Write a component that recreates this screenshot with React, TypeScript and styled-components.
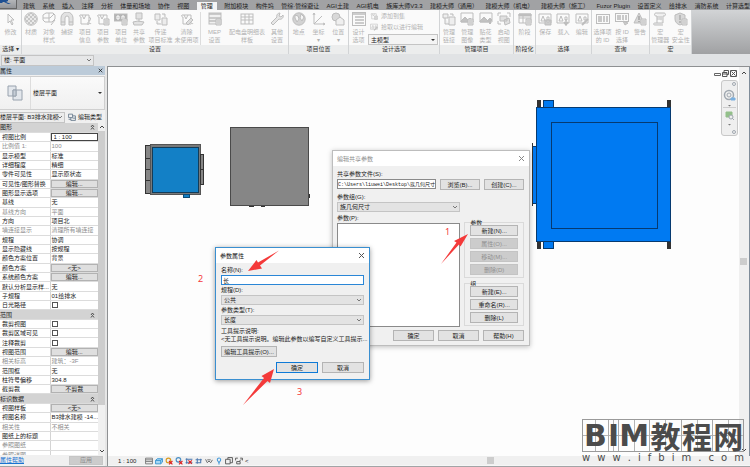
import React from "react";
import styled, { createGlobalStyle, css } from "styled-components";

const GlobalStyle = createGlobalStyle`
  *, *::before, *::after { box-sizing: border-box; }
  html, body, #root { height: 100%; }
  body {
    margin: 0;
    overflow: hidden;
    font: 6px/8px "Liberation Sans", "Noto Sans CJK SC", sans-serif;
    color: #222;
    background: #e1e3e5;
  }
  button, input, select { font: inherit; color: inherit; margin: 0; padding: 0; border-radius: 0; }
  button, select { cursor: pointer; }
  p { margin: 0; }
`;

/* ---------- page frame ---------- */

const Page = styled.div`
  display: flex;
  flex-direction: column;
  height: 100vh;
  border-bottom: 1px solid #a2a4a6;
`;

const TabBar = styled.nav`
  display: flex;
  height: 10px;
  background: #a1a2a4;
  overflow: hidden;
`;

const AppButton = styled.button`
  width: 17px;
  height: 9px;
  flex: none;
  border: 0;
  border-right: 1px solid #666;
  border-bottom: 1px solid #666;
  background: linear-gradient(#b4b6b9, #94969a);
  svg { display: block; }
`;

const TabList = styled.div`
  flex: 1;
  display: flex;
  justify-content: space-between;
  margin: 2px 0 0 6px;
`;

const Tab = styled.button<{ $active?: boolean }>`
  flex: none;
  border: 0;
  padding: 0 ${(p) => (p.$active ? 4 : 0)}px;
  background: ${(p) => (p.$active ? "#f4f5f5" : "transparent")};
  color: #1c1c1c;
  line-height: 8px;
  white-space: nowrap;
`;

const Ribbon = styled.div`
  display: flex;
  height: 44px;
  background: linear-gradient(#d2d4d6, #a0a1a3);
`;

const Panel = styled.section<{ $w: number }>`
  flex: none;
  width: ${(p) => p.$w}px;
  display: flex;
  flex-direction: column;
  background: #fafafa;
  border-right: 1px solid #d2d4d6;
`;

const PanelBody = styled.div`
  flex: 1;
  display: flex;
  padding-top: 2px;
`;

const PanelTitle = styled.h2`
  margin: 0;
  height: 9px;
  font-size: 6px;
  line-height: 9px;
  font-weight: 400;
  text-align: center;
  white-space: nowrap;
  background: #eceded;
  color: #333;
`;

const Tool = styled.button<{ $w?: number }>`
  ${(p) => (p.$w ? css`flex: none; width: ${p.$w}px;` : css`flex: 1; min-width: 0;`)}
  display: flex;
  flex-direction: column;
  align-items: center;
  gap: 2px;
  border: 0;
  background: none;
  color: #b2b2b2;
  line-height: 8px;
  white-space: pre;
  svg { flex: none; }
`;

const ToolDivider = styled.span`
  width: 1px;
  background: #dcdcdc;
`;

const OptionTools = styled.div`
  flex: 1;
  display: flex;
  flex-direction: column;
  gap: 3px;
  padding-right: 1px;
`;

const InlineTool = styled.button`
  display: flex;
  align-items: center;
  gap: 3px;
  height: 8px;
  border: 0;
  padding-left: 2px;
  background: none;
  color: #b2b2b2;
  white-space: nowrap;
`;

const SelectWrap = styled.span`
  position: relative;
  display: block;
  svg { position: absolute; right: 2px; top: 50%; margin-top: -3px; pointer-events: none; }
`;

const SelectBox = styled.select<{ $h?: number; $tone?: string }>`
  appearance: none;
  display: block;
  width: 100%;
  height: ${(p) => p.$h ?? 10}px;
  padding: 0 8px 0 2px;
  border: 1px solid #c4c4c4;
  background: ${(p) => p.$tone ?? "#e3e3e3"};
  line-height: 8px;
  outline: none;
`;

const OptionsBar = styled.div`
  height: 12px;
  display: flex;
  align-items: center;
  background: #e1e3e5;
`;

const OptionSelect = styled.div`
  width: 94px;
  padding-left: 1px;
`;

const Workspace = styled.main`
  flex: 1;
  min-height: 0;
  display: flex;
`;

/* ---------- properties palette ---------- */

const Palette = styled.aside`
  flex: none;
  width: 105px;
  display: flex;
  flex-direction: column;
  background: #f0f0f0;
  overflow: hidden;
`;

const PaletteTitle = styled.header`
  display: flex;
  justify-content: space-between;
  align-items: center;
  height: 9px;
  padding-right: 2px;
  background: #bccbd9;
`;

const PlainButton = styled.button`
  border: 0;
  background: none;
  display: flex;
  align-items: center;
  gap: 2px;
  white-space: nowrap;
`;

const TypeSelector = styled.button`
  display: flex;
  align-items: center;
  height: 34px;
  margin: 1px 0;
  border: 1px solid #cfcfcf;
  border-left: 0;
  background: linear-gradient(#fafafa, #f0f0f0);
  text-align: left;
  padding-right: 1px;
`;

const TypeThumb = styled.span`
  width: 31px;
  height: 100%;
  display: grid;
  place-items: center;
  border-right: 1px solid #ddd;
  margin-right: 2px;
`;

const Grow = styled.span`
  flex: 1;
`;

const InstanceRow = styled.div`
  display: flex;
  align-items: center;
  height: 12px;
  padding-right: 3px;
  gap: 3px;
`;

const InstanceSelect = styled.div`
  width: 65px;
  select { padding-left: 0; padding-right: 0; border-left: 0; }
`;

const PaletteBody = styled.div`
  flex: 1;
  min-height: 0;
  display: flex;
  overflow: hidden;
`;

const TableClip = styled.div`
  width: 98px;
  height: 100%;
  overflow: hidden;
`;

const PropTable = styled.table`
  width: 100%;
  height: calc(100% + 5px);
  border-collapse: collapse;
  table-layout: fixed;
  background: #fff;
  td, th {
    padding: 0;
    height: 9px;
    text-align: left;
    font-weight: 400;
    line-height: 8px;
    white-space: nowrap;
    overflow: hidden;
    border-bottom: 1px solid #dcdcdc;
  }
`;

const NameCell = styled.th<{ $dim?: boolean }>`
  && { padding-left: 2px; border-right: 1px solid #d4d4d4; }
  color: ${(p) => (p.$dim ? "#8c8c8c" : "#222")};
`;

const ValueCell = styled.td<{ $dim?: boolean; $boxed?: boolean }>`
  && { padding-left: ${(p) => (p.$boxed ? 0 : 1)}px; }
  color: ${(p) => (p.$dim ? "#8c8c8c" : "#222")};
`;

const GroupCell = styled.th`
  && { background: #d3d3d3; }
`;

const GroupLabel = styled.span`
  display: flex;
  justify-content: space-between;
  align-items: center;
  padding-right: 3px;
`;

const CellButton = styled.button`
  display: block;
  width: 100%;
  height: 8px;
  border: 1px solid #b2b2b2;
  background: #dfdfdf;
  line-height: 6px;
`;

const ScaleInput = styled.input`
  display: block;
  width: 100%;
  height: 8px;
  border: 1px solid #444;
  padding-left: 2px;
  line-height: 6px;
`;

const Check = styled.input`
  appearance: none;
  display: block;
  width: 6px;
  height: 6px;
  border: 1px solid #555;
  background: #fff;
`;

const PaletteScroll = styled.div`
  flex: 1;
  display: flex;
  flex-direction: column;
  align-items: center;
  justify-content: space-between;
  background: #f0f0f0;
`;

const ScrollThumb = styled.span`
  width: 7px;
  flex: 1;
  margin-bottom: 42px;
  background: #cdcdcd;
`;

const PaletteFooter = styled.footer`
  display: flex;
  justify-content: space-between;
  height: 11px;
  padding: 1px 2px 1px 0;
  a { color: #1a73d0; }
`;

const ApplyButton = styled.button`
  width: 34px;
  border: 1px solid #c6c6c6;
  background: #cccccc;
  color: #8a8a8a;
  line-height: 7px;
`;

const Splitter = styled.div`
  width: 3px;
  background: #e6e6e6;
  border-right: 1px solid #8e9092;
`;

/* ---------- drawing area ---------- */

const ViewArea = styled.div`
  flex: 1;
  min-width: 0;
  display: flex;
  flex-direction: column;
  border-top: 1px solid #8e9092;
`;

const ViewRow = styled.div`
  flex: 1;
  min-height: 0;
  display: flex;
`;

const Canvas = styled.div`
  position: relative;
  flex: 1;
  background: #fdfdfd;
`;

const Sheet = styled.svg`
  position: absolute;
  left: 0;
  top: 0;
  width: 100%;
  height: 100%;
  pointer-events: none;
`;

const VScroll = styled.div`
  width: 8px;
  display: flex;
  flex-direction: column;
  align-items: center;
  justify-content: space-between;
  padding: 2px 0;
  background: #f0f0f0;
`;

const Thumb = styled.span`
  width: 7px;
  height: 7px;
  background: #cdcdcd;
`;

const EdgeBar = styled.div`
  width: 3px;
  background: #f0f0f0;
  border-right: 1px solid #7f8c99;
`;

const ViewBar = styled.div`
  height: 10px;
  display: flex;
  align-items: center;
  gap: 2px;
  padding-left: 10px;
  background: #f0f0f0;
  border-bottom: 1px solid #f6f6f6;
`;

const ScaleText = styled.span`
  width: 25px;
  white-space: nowrap;
`;

const HScroll = styled.div`
  flex: 1;
  display: flex;
  justify-content: center;
  padding-right: 20px;
`;

const WindowButtons = styled.div`
  position: absolute;
  right: 2px;
  top: 3px;
  display: flex;
  gap: 1px;
`;

const NavBar = styled.div`
  position: absolute;
  right: 1px;
  top: 13px;
  width: 17px;
  height: 56px;
  border: 1px solid #c8c8c8;
  border-radius: 3px;
  background: #efefef;
`;

/* ---------- dialogs ---------- */

const Dialog = styled.div<{ $x: number; $y: number; $w: number; $active?: boolean }>`
  position: absolute;
  left: ${(p) => p.$x}px;
  top: ${(p) => p.$y}px;
  width: ${(p) => p.$w}px;
  background: #f0f0f0;
  border: 1px solid ${(p) => (p.$active ? "#3a8fd0" : "#bdbdbd")};
  box-shadow: 0 1px 5px rgba(0, 0, 0, ${(p) => (p.$active ? 0.4 : 0.25)});
`;

const DialogTitle = styled.header<{ $muted?: boolean }>`
  display: flex;
  justify-content: space-between;
  align-items: center;
  height: 15px;
  padding: 0 4px;
  background: #fff;
  color: ${(p) => (p.$muted ? "#8e8e8e" : "#111")};
`;

const SharedBody = styled.div`
  display: flex;
  flex-direction: column;
  padding: 4px 5px 4px 4px;
`;

const Label = styled.label`
  display: block;
  height: 9px;
  line-height: 8px;
  white-space: nowrap;
`;

const Row = styled.div<{ $end?: boolean; $mt?: number }>`
  display: flex;
  gap: 4px;
  margin-top: ${(p) => p.$mt ?? 0}px;
  justify-content: ${(p) => (p.$end ? "flex-end" : "flex-start")};
`;

const TextBox = styled.input<{ $focus?: boolean }>`
  flex: 1;
  min-width: 0;
  width: 100%;
  height: 10px;
  border: 1px solid ${(p) => (p.$focus ? "#2a86d6" : "#8a8a8a")};
  padding: 0 1px;
  background: #fff;
  outline: none;
`;

const PathBox = styled(TextBox)`
  padding: 0;
  font-family: "Liberation Mono", "Noto Sans CJK SC", monospace;
  font-size: 5px;
`;

const DialogButton = styled.button<{ $w?: number; $primary?: boolean }>`
  width: ${(p) => (p.$w ? `${p.$w}px` : "100%")};
  flex: none;
  height: 11px;
  border: 1px solid ${(p) => (p.$primary ? "#0f7ad6" : "#b4b4b4")};
  background: #e2e2e2;
  line-height: 8px;
  white-space: nowrap;
  &:disabled { background: #cccccc; border-color: #c4c4c4; color: #909090; }
`;

const SharedColumns = styled.div`
  display: flex;
  gap: 4px;
  justify-content: space-between;
`;

const SharedLeft = styled.div`
  width: 124px;
`;

const ListBox = styled.div`
  height: 104px;
  border: 1px solid #8a8a8a;
  background: #fff;
`;

const SharedRight = styled.div`
  width: 60px;
  padding-top: 30px;
`;

const Group = styled.fieldset`
  margin: 0 0 3px;
  padding: 0 5px 2px;
  min-width: 0;
  border: 1px solid #dadada;
  legend { padding: 0; line-height: 6px; height: 5px; }
  &:last-child { margin-bottom: 0; }
`;

const ButtonStack = styled.div`
  display: flex;
  flex-direction: column;
  gap: 2px;
`;

const ParamBody = styled.div`
  padding: 3px 5px 6px;
`;

const FieldBlock = styled.div`
  margin-bottom: 1px;
`;

const Hint = styled.p`
  height: 8px;
  white-space: nowrap;
`;

/* ---------- watermark ---------- */

const Watermark = styled.div`
  position: absolute;
  right: -5px;
  bottom: -8px;
  width: 162px;
  color: #4b4b4b;
`;

const Cells = styled.div`
  display: flex;
  height: 33px;
  border: 1px solid #9a9a9a;
`;

const Cell = styled.span<{ $w: number; $latin?: boolean }>`
  flex: ${(p) => p.$w} 0 0;
  min-width: 0;
  display: flex;
  justify-content: center;
  border-right: 1px solid #aaa;
  background:
    linear-gradient(#b4b4b4, #b4b4b4) center / 1px 100% no-repeat,
    linear-gradient(#b4b4b4, #b4b4b4) center / 100% 1px no-repeat;
  font: ${(p) => (p.$latin ? '700 30px/32px "DejaVu Sans", sans-serif' : '700 30px/30px "Noto Sans CJK SC", sans-serif')};
  &:last-child { border-right: 0; }
`;

const SiteLine = styled.p`
  font: 10px/12px "DejaVu Sans", sans-serif;
  text-align: justify;
  text-align-last: justify;
  white-space: nowrap;
`;

/* ---------- icons ---------- */

const Svg = ({ s = 14, children, stroke = "#bdbdbd" }: { s?: number; children: React.ReactNode; stroke?: string }) => (
  <svg width={s} height={s} viewBox="0 0 14 14" fill="none" stroke={stroke} strokeWidth="1" aria-hidden="true">
    {children}
  </svg>
);

const sheet = <path d="M2 3h9v8c0 1 2 1 2 0M2 3c-1 1 0 2 1 2v7h8M4 3l2 4 2-4" />;
const page = <path d="M8 7h5v6H8zM9 9h3M9 11h3" fill="#e6e6e6" />;
const warn = <path d="M1 2h12v9H1zM3 9l2-5 2 5zM9 5h2v3H9z" />;

const icons: Record<string, React.ReactNode> = {
  cursor: <path d="M4 2l6 6H7l2 4-1 1-2-4-2 2z" fill="#f6f6f6" />,
  material: (
    <>
      <circle cx="7" cy="7" r="6.3" fill="#e9e9e9" />
      <path d="M2 4l8 8M4 2l8 8M7 1l6 6M1 7l6 6M12 4l-8 8M10 2l-8 8M7 1L1 7M13 7l-6 6" strokeWidth=".8" />
    </>
  ),
  object: <path d="M1 3l3-2h7l2 2v4l-3 3H3L1 8zM1 6h7l4-4M7 1v9M9 13l4-5" />,
  snap: <path d="M1 13V6a6 6 0 0 1 12 0v7H9V6a2 2 0 0 0-4 0v7zM1 10h4M9 10h4" fill="#e2e2e2" />,
  info: <>{sheet}<path d="M11 5a2 2 0 1 1-1 4M10 10v3" /></>,
  params: <>{sheet}{page}</>,
  units: <><rect x="0" y="2" width="13" height="7" fill="#b4b4b4" /><path d="M3 4v3h2V4zM8 4v3h2V4z" stroke="#fff" />{page}</>,
  shared: <><path d="M4 1h6v6H4zM1 10l5-1 6 1-2 3H2zM7 7v3" fill="#e2e2e2" /></>,
  transfer: <><path d="M1 2h5v6H1zM8 6h5v7H8zM8 2h3v3M3 9v3h4" fill="#ececec" /></>,
  purge: <>{sheet}<path d="M11 6l-5 5 2 2 5-5z" fill="#ddd" /></>,
  mep: <><rect x="1" y="1" width="12" height="11" fill="#f0f0f0" /><path d="M1 2h12M1 6h12M1 9h7" strokeWidth="1.5" />{page}</>,
  schedule: <><rect x="1" y="2" width="12" height="10" /><path d="M1 5h12M1 8h12M5 2v10M9 2v10" /></>,
  wrench: <path d="M1 11l6-6c-1-2 1-4 3-4l-1 3 2 1 2-2c1 3-2 5-4 4l-6 6z" fill="#e6e6e6" />,
  globe: <><circle cx="7" cy="7" r="6.2" fill="#d2d2d2" /><path d="M3 3l3 1 1 3-2 3-2-4zM9 2l3 3-2 4-2-3z" fill="#f5f5f5" /></>,
  axes: <path d="M2 1v11h11M2 12l8-8M1 3l1-2 1 2M11 11l2 1-2 1" />,
  position: <><circle cx="5" cy="5" r="4" fill="#d8d8d8" /><path d="M5 8l4-3 4 3v5H5z" fill="#efefef" /></>,
  list: <><rect x="0.5" y="0.5" width="13" height="13" /><path d="M1 2h12M3 5h9M3 8h9M3 11h9" strokeWidth="1.5" /></>,
  link: <><path d="M1 2h5v4H1zM7 5h6v8H7zM3 6v6h4M8 2h3v2" fill="#eee" /></>,
  image: <><path d="M1 1h12v9H1z" /><path d="M1 9l4-4 3 3 2-2 3 3v1H1z" fill="#c2c2c2" />{page}</>,
  decal: <><path d="M1 1h12v9H1z" /><path d="M1 9l4-4 5 5H1z" fill="#c2c2c2" /><path d="M11 6v6M9 8h4" strokeWidth="2" /></>,
  start: <><path d="M1 4V1h3M10 1h3v4M1 9v3h3" /><path d="M3 4h7v5H3zM7 8l5-2 1 5-5 2z" fill="#e0e0e0" /></>,
  phase: <><path d="M1 2h12v9H1zM1 6h12M5 2v9" /><path d="M1 2h12v2H1z" fill="#c0c0c0" />{page}</>,
  save: <>{warn}<path d="M7 8h6v5H7zM9 8v2h2V8" fill="#ccc" /></>,
  load: <>{warn}<path d="M10 7v5M8 10l2 3 2-3" strokeWidth="1.5" /></>,
  edit: <>{warn}<path d="M7 13l6-6" strokeWidth="2" /></>,
  barcode: <><rect x="0.5" y="2.5" width="13" height="9" /><path d="M3 4v6M5 4v6M8 4v6M11 4v6" strokeWidth="1.6" /></>,
  barid: <><rect x="0.5" y="1.5" width="13" height="8" /><path d="M3 3v5M5 3v5M8 3v5M11 3v5" strokeWidth="1.6" /><path d="M8 9l5 2-3 2z" fill="#ccc" /></>,
  alert: <><path d="M6 1L1 11h10z" fill="#d8d8d8" /><path d="M6 4v4M6 9v1" stroke="#888" />{page}</>,
  macro: <path d="M3 1h8c2 0 2 3 0 3h-1v7H2c-2 0-2 2 0 2h8M4 5h5M4 7h5M3 1C1 1 1 4 3 4h1v7" fill="#efefef" />,
  shield: <><path d="M6 1l5 2v4c0 3-2 5-5 6-3-1-5-3-5-6V3z" fill="#d8d8d8" /><path d="M6 3v5M6 9v2" stroke="#999" />{page}</>,
};

const Chevron = ({ dark }: { dark?: boolean }) => (
  <svg width="6" height="6" viewBox="0 0 6 6" fill="none" stroke={dark ? "#333" : "#777"} aria-hidden="true">
    <path d="M1 2l2 2 2-2" />
  </svg>
);
const Caret = ({ color = "#333" }: { color?: string }) => (
  <svg width="6" height="6" viewBox="0 0 6 6" fill={color} aria-hidden="true"><path d="M1 2h4L3 4z" /></svg>
);
const Cross = ({ color = "#555", s = 7 }: { color?: string; s?: number }) => (
  <svg width={s} height={s} viewBox="0 0 7 7" fill="none" stroke={color} aria-hidden="true"><path d="M1 1l5 5M6 1L1 6" /></svg>
);
const ScrollArrow = ({ up }: { up?: boolean }) => (
  <svg width="7" height="8" viewBox="0 0 7 8" fill="none" stroke="#444" aria-hidden="true">
    <path d={up ? "M2 5l2-2 2 2" : "M2 3l2 2 2-2"} />
  </svg>
);

/* ---------- data ---------- */

const tabs = ["建筑", "系统", "插入", "注释", "分析", "体量和场地", "协作", "视图", "管理", "附加模块", "构件坞", "管综·管综避让", "AGI土建", "AGI机电", "族库大师V3.3", "建模大师（通用）", "建模大师（机电）", "建模大师（施工）", "Fuzor Plugin", "设置定义", "给排水", "消防系统", "计算选型"];

type ToolDef = [icon: string, label: string, width?: number];

const settings: ToolDef[] = [
  ["material", "材质", 18], ["object", "对象\n样式", 18], ["snap", "捕捉", 18], ["info", "项目\n信息", 18],
  ["params", "项目\n参数", 18], ["units", "项目\n单位", 18], ["shared", "共享\n参数", 18],
  ["transfer", "传递\n项目标准", 25], ["purge", "清除\n未使用项", 27],
];
const mepTools: ToolDef[] = [["mep", "MEP\n设置", 27], ["schedule", "配电盘明细表\n样板", 38], ["wrench", "其他\n设置"]];

type Prop = { n: string; v?: string; k?: "group" | "btn" | "check" | "scale"; dim?: boolean };
const props: Prop[] = [
  { n: "图形", k: "group" },
  { n: "视图比例", v: "1 : 100", k: "scale" },
  { n: "比例值 1:", v: "100", dim: true },
  { n: "显示模型", v: "标准" },
  { n: "详细程度", v: "精细" },
  { n: "零件可见性", v: "显示原状态" },
  { n: "可见性/图形替换", v: "编辑...", k: "btn" },
  { n: "图形显示选项", v: "编辑...", k: "btn" },
  { n: "基线", v: "无" },
  { n: "基线方向", v: "平面", dim: true },
  { n: "方向", v: "项目北" },
  { n: "墙连接显示", v: "清理所有墙连接", dim: true },
  { n: "规程", v: "协调" },
  { n: "显示隐藏线", v: "按规程" },
  { n: "颜色方案位置", v: "背景" },
  { n: "颜色方案", v: "<无>", k: "btn" },
  { n: "系统颜色方案", v: "编辑...", k: "btn" },
  { n: "默认分析显示样...", v: "无" },
  { n: "子规程", v: "01给排水" },
  { n: "日光路径", k: "check" },
  { n: "范围", k: "group" },
  { n: "裁剪视图", k: "check" },
  { n: "裁剪区域可见", k: "check" },
  { n: "注释裁剪", k: "check" },
  { n: "视图范围", v: "编辑...", k: "btn" },
  { n: "相关标高", v: "建筑：-3F", dim: true },
  { n: "范围框", v: "无" },
  { n: "柱符号偏移", v: "304.8" },
  { n: "截剪裁", v: "不剪裁", k: "btn" },
  { n: "标识数据", k: "group" },
  { n: "视图样板", v: "<无>", k: "btn" },
  { n: "视图名称", v: "B3排水建模 -14..." },
  { n: "相关性", v: "不相关", dim: true },
  { n: "图纸上的标题", v: "" },
  { n: "参照图纸", v: "", dim: true },
  { n: "参照详图", v: "", dim: true },
];

/* ---------- parts ---------- */

const Tools = ({ items }: { items: ToolDef[] }) => (
  <>
    {items.map(([icon, label, w]) => (
      <Tool key={label} $w={w}>
        <Svg>{icons[icon]}</Svg>
        <span>{label}</span>
      </Tool>
    ))}
  </>
);

const RibbonPanel = ({ title, w, items, children }: { title: React.ReactNode; w: number; items?: ToolDef[]; children?: React.ReactNode }) => (
  <Panel $w={w}>
    <PanelBody>{items && <Tools items={items} />}{children}</PanelBody>
    <PanelTitle>{title}</PanelTitle>
  </Panel>
);

const Drop = ({ id, label, value, h, tone, caret }: { id?: string; label?: string; value: string; h?: number; tone?: string; caret?: boolean }) => (
  <SelectWrap>
    <SelectBox id={id} aria-label={label} $h={h} $tone={tone}><option>{value}</option></SelectBox>
    {caret ? <Caret /> : <Chevron />}
  </SelectWrap>
);

const Collapse = () => (
  <svg width="5" height="6" viewBox="0 0 5 6" fill="none" stroke="#333" strokeWidth=".8" aria-hidden="true">
    <path d="M1 3l1.5-2L4 3M1 5.5l1.5-2 1.5 2" />
  </svg>
);

const PropRow = ({ p }: { p: Prop }) => {
  if (p.k === "group")
    return <tr><GroupCell colSpan={2}><GroupLabel>{p.n}<Collapse /></GroupLabel></GroupCell></tr>;
  return (
    <tr>
      <NameCell scope="row" $dim={p.dim}>{p.n}</NameCell>
      <ValueCell $dim={p.dim} $boxed={p.k === "btn" || p.k === "scale"}>
        {p.k === "btn" ? <CellButton>{p.v}</CellButton>
          : p.k === "check" ? <Check type="checkbox" aria-label={p.n} />
          : p.k === "scale" ? <ScaleInput aria-label={p.n} defaultValue={p.v} />
          : p.v}
      </ValueCell>
    </tr>
  );
};

const PropertiesPalette = () => (
  <Palette>
    <PaletteTitle>属性<PlainButton aria-label="关闭"><Cross color="#111" s={5} /></PlainButton></PaletteTitle>
    <TypeSelector>
      <TypeThumb>
        <svg width="16" height="16" viewBox="0 0 16 16" fill="#e3e7ec" stroke="#98a2ae" aria-hidden="true">
          <path d="M1 1h8v10H1zM6 5h9v10H6z" /><path d="M6 5h3v6H6z" fill="#c5cdd6" />
        </svg>
      </TypeThumb>
      <Grow>楼层平面</Grow>
      <Caret />
    </TypeSelector>
    <InstanceRow>
      <InstanceSelect><Drop label="视图" value="楼层平面: B3排水建模" h={11} tone="#ececec" /></InstanceSelect>
      <PlainButton>
        <Svg s={8} stroke="#5f7488"><path d="M1 2h7v6H1zM8 5h5v8H5V8M1 11h4M8 9h5" strokeWidth="1.4" /></Svg>
        编辑类型
      </PlainButton>
    </InstanceRow>
    <PaletteBody>
      <TableClip>
        <PropTable>
          <colgroup><col width="50" /><col /></colgroup>
          <tbody>{props.map((p) => <PropRow key={p.n} p={p} />)}</tbody>
        </PropTable>
      </TableClip>
      <PaletteScroll><ScrollArrow up /><ScrollThumb /><ScrollArrow /></PaletteScroll>
    </PaletteBody>
    <PaletteFooter><a href="#help">属性帮助</a><ApplyButton disabled>应用</ApplyButton></PaletteFooter>
  </Palette>
);

const Model = () => (
  <Sheet aria-hidden="true">
    <g transform="translate(-108 -67)" stroke="#333" fill="#868686">
      <rect x="145.500" y="145.500" width="5" height="48" />
      <path d="M145 158.500h6M145 169.500h6M145 180.500h6" />
      <rect x="150.500" y="144.500" width="50" height="50" fill="#77797a" stroke="#555" />
      <rect x="152.500" y="147.500" width="46" height="45" fill="#1380c6" stroke="#143c58" />
      <rect x="200.500" y="154.500" width="3" height="30" /><path d="M200 169.500h4" />
      <rect x="183.500" y="194.500" width="6" height="3" fill="#1380c6" stroke="#0d4a75" />
      <rect x="230.500" y="127.500" width="78" height="78" stroke="#4a4a4a" />
      <path d="M249 206.500h5M261 206.500h4M309.500 194v4" />
      <g fill="#007af2" stroke="#063a70">
        <rect x="543.500" y="100.500" width="10" height="7" /><rect x="543.500" y="241.500" width="10" height="7" />
        <rect x="532.500" y="146.500" width="4" height="57" />
        <rect x="536.500" y="107.500" width="134" height="134" />
        <rect x="551.500" y="122.500" width="106" height="106" />
      </g>
      <path d="M532.500 143v63" />
      <g fill="#333" stroke="none">
        <path d="M537 100h4v7h-4zM667 100h4v7h-4zM537 242h4v7h-4zM667 242h4v7h-4z" />
      </g>
    </g>
  </Sheet>
);

const Notes = () => (
  <Sheet aria-hidden="true">
    <g transform="translate(-108 -67)" fill="#f43a3a">
      <path d="M468 234l-7.500 12.500-1.500-2L441 264l15.500-21.500-2.500-1.500z" />
      <path d="M248 271l8.500-11 1.500 2.500L279 250.500 260 265.500l2 3z" />
      <path d="M274 369l-4 14-2.500-2L243 405l21-27-2.500-2z" />
      <g fontFamily="Noto Sans, sans-serif" fontSize="9">
        <text x="445" y="235">1</text><text x="198" y="282">2</text><text x="297" y="395">3</text>
      </g>
    </g>
  </Sheet>
);

const SharedDialog = () => (
  <Dialog $x={224} $y={83} $w={198} role="dialog" aria-label="编辑共享参数">
    <DialogTitle $muted>编辑共享参数<PlainButton aria-label="关闭"><Cross color="#888" /></PlainButton></DialogTitle>
    <SharedBody>
      <Label htmlFor="file">共享参数文件(S):</Label>
      <Row>
        <PathBox id="file" defaultValue="C:\Users\liuwei\Desktop\族几何尺寸" />
        <DialogButton $w={40}>浏览(B)...</DialogButton>
        <DialogButton $w={40}>创建(C)...</DialogButton>
      </Row>
      <SharedColumns>
        <SharedLeft>
          <Row $mt={3}><Label htmlFor="group">参数组(G):</Label></Row>
          <Drop id="group" value="族几何尺寸" />
          <Row $mt={2}><Label as="span">参数(P):</Label></Row>
          <ListBox role="listbox" aria-label="参数" />
        </SharedLeft>
        <SharedRight>
          <Group>
            <legend>参数</legend>
            <ButtonStack>
              <DialogButton>新建(N)...</DialogButton>
              <DialogButton disabled>属性(O)...</DialogButton>
              <DialogButton disabled>移动(M)...</DialogButton>
              <DialogButton disabled>删除(D)</DialogButton>
            </ButtonStack>
          </Group>
          <Group>
            <legend>组</legend>
            <ButtonStack>
              <DialogButton>新建(E)...</DialogButton>
              <DialogButton>重命名(R)...</DialogButton>
              <DialogButton>删除(L)</DialogButton>
            </ButtonStack>
          </Group>
        </SharedRight>
      </SharedColumns>
      <Row $end $mt={3}>
        <DialogButton $w={41}>确定</DialogButton>
        <DialogButton $w={41}>取消</DialogButton>
        <DialogButton $w={41}>帮助(H)</DialogButton>
      </Row>
    </SharedBody>
  </Dialog>
);

const ParamDialog = () => (
  <Dialog $x={107} $y={180} $w={155} $active role="dialog" aria-label="参数属性">
    <DialogTitle>参数属性<PlainButton aria-label="关闭"><Cross /></PlainButton></DialogTitle>
    <ParamBody>
      <FieldBlock><Label htmlFor="name">名称(N):</Label><TextBox id="name" $focus defaultValue="长" /></FieldBlock>
      <FieldBlock><Label htmlFor="disc">规程(D):</Label><Drop id="disc" value="公共" /></FieldBlock>
      <FieldBlock><Label htmlFor="type">参数类型(T):</Label><Drop id="type" value="长度" /></FieldBlock>
      <Row $mt={2}><Hint>工具提示说明:</Hint></Row>
      <Hint>&lt;无工具提示说明。编辑此参数以编写自定义工具提示...</Hint>
      <Row $mt={3}><DialogButton $w={56}>编辑工具提示(O)...</DialogButton></Row>
      <Row $end $mt={5}>
        <DialogButton $w={42} $primary>确定</DialogButton>
        <DialogButton $w={42}>取消</DialogButton>
      </Row>
    </ParamBody>
  </Dialog>
);

const viewIcons: [string, React.ReactNode][] = [
  ["#777", <path key="a" d="M1 2h12v10H1zM1 5h12M1 8h12" strokeWidth="1.6" />],
  ["#2d8fd0", <path key="b" d="M1 6l3-3h9v6l-3 3H1zM1 6h9v6M10 6l3-3" fill="#a8d8f5" strokeWidth="1.5" />],
  ["#d89a20", <><circle key="c" cx="6" cy="6" r="4" strokeWidth="2" /><path d="M7 7l6 6M13 7l-6 6" stroke="#d22" strokeWidth="2" /></>],
  ["#4b8fc4", <><circle key="d" cx="6" cy="5" r="4" strokeWidth="2" /><path d="M7 7l6 6M13 7l-6 6" stroke="#d22" strokeWidth="2" /></>],
  ["#4b78b0", <><path key="e" d="M1 4h12M3 2v10M1 10h12" strokeWidth="1.8" /><path d="M6 6l6 6M12 6l-6 6" stroke="#d22" strokeWidth="2" /></>],
  ["#4b78b0", <path key="f" d="M1 5h11M4 2v10M1 10h8M10 3v8" strokeWidth="1.8" />],
  ["#666", <path key="g" d="M1 4l3 6 3-3 3 3 3-5M4 5h6" strokeWidth="1.6" />],
  ["#3d96d8", <path key="h" d="M7 13V9M4 5a3 3 0 1 1 5 2l-2 3-2-3z" strokeWidth="1.8" />],
  ["#555", <path key="i" d="M1 4h8v8H1zM5 4V1h8v9H9" strokeWidth="1.6" />],
  ["#555", <path key="j" d="M1 2h4M1 2v4M9 2h4v4M3 12V8h6v4zM11 4l-4 4" strokeWidth="1.6" />],
];

export default function App() {
  return (
    <>
      <GlobalStyle />
      <Page>
        <TabBar>
          <AppButton aria-label="应用程序菜单">
            <svg width="16" height="8" viewBox="0 0 16 8" aria-hidden="true">
              <path d="M0 0h8v1L6 2l5 2H8L4 2H2l1 1H0z" fill="#1d4f92" />
            </svg>
          </AppButton>
          <TabList>{tabs.map((t) => <Tab key={t} $active={t === "管理"}>{t}</Tab>)}</TabList>
        </TabBar>
        <Ribbon>
          <RibbonPanel w={22} title="选择 ▾" items={[["cursor", "修改"]]} />
          <RibbonPanel w={267} title="设置" items={settings}>
            <ToolDivider />
            <Tools items={mepTools} />
          </RibbonPanel>
          <RibbonPanel w={60} title="项目位置" items={[["globe", "地点\n "], ["axes", "坐标\n▾"], ["position", "位置\n▾"]]} />
          <RibbonPanel w={91} title="设计选项" items={[["list", "设计\n选项", 19]]}>
            <OptionTools>
              <InlineTool><Svg s={8}>{icons.params}</Svg>添加到集</InlineTool>
              <InlineTool><Svg s={8}>{icons.edit}</Svg>拾取以进行编辑</InlineTool>
              <Drop label="设计选项" value="主模型" h={11} tone="#f4f4f4" caret />
            </OptionTools>
          </RibbonPanel>
          <RibbonPanel w={74} title="管理项目" items={[["link", "管理\n链接"], ["image", "管理\n图像"], ["decal", "贴花\n类型"], ["start", "启动\n视图"]]} />
          <RibbonPanel w={22} title="阶段化" items={[["phase", "阶段"]]} />
          <RibbonPanel w={56} title="选择" items={[["save", "保存"], ["load", "载入"], ["edit", "编辑"]]} />
          <RibbonPanel w={58} title="查询" items={[["barcode", "选择项\n的 ID", 21], ["barid", "按 ID\n选择"], ["alert", "警告"]]} />
          <RibbonPanel w={42} title="宏" items={[["macro", "宏\n管理器"], ["shield", "宏\n安全性"]]} />
        </Ribbon>
        <OptionsBar>
          <OptionSelect><Drop label="选项" value="楼:  平面" h={11} tone="#e6e7e8" /></OptionSelect>
        </OptionsBar>
        <Workspace>
          <PropertiesPalette />
          <Splitter />
          <ViewArea>
            <ViewRow>
              <Canvas>
                <Model />
                <WindowButtons>
                  <PlainButton aria-label="最小化"><Svg s={7} stroke="#666"><path d="M1 7h12v4H1z" strokeWidth="2" /></Svg></PlainButton>
                  <PlainButton aria-label="还原"><Svg s={7} stroke="#555"><path d="M1 5h9v8H1zM4 5V1h9v8h-3M1 8h9" strokeWidth="2" /></Svg></PlainButton>
                  <PlainButton aria-label="关闭视图"><Svg s={7} stroke="#555"><path d="M1 1h12v12H1zM3 3l8 8M11 3l-8 8" strokeWidth="2" /></Svg></PlainButton>
                </WindowButtons>
                <NavBar>
                  <svg width="15" height="54" viewBox="0 0 15 54" fill="none" stroke="#a0a8b0" aria-hidden="true">
                    <circle cx="12" cy="3" r="1.500" /><circle cx="12" cy="51" r="1.500" />
                    <circle cx="7" cy="14" r="4.500" strokeWidth="1.500" /><circle cx="7" cy="14" r="2" />
                    <path d="M9 17h4v2H9z" fill="#7ab0e0" stroke="#7ab0e0" />
                    <path d="M1 26.500h13" stroke="#ccc" />
                    <path d="M4 31h6v5H4z" fill="#93c08a" stroke="#93c08a" /><circle cx="9" cy="36" r="2" fill="#eee" /><path d="M10 37l2 2" />
                    <path d="M6 24h3l-1.500 1.500zM6 43h3l-1.500 1.500z" fill="#777" stroke="none" />
                  </svg>
                </NavBar>
                <SharedDialog />
                <ParamDialog />
                <Notes />
                <Watermark>
                  <Cells>
                    <Cell $w={26} $latin>B</Cell><Cell $w={10} $latin>I</Cell><Cell $w={31} $latin>M</Cell>
                    <Cell $w={32}>教</Cell><Cell $w={32}>程</Cell><Cell $w={31}>网</Cell>
                  </Cells>
                  <SiteLine>w w w . i f b i m . c o m</SiteLine>
                </Watermark>
              </Canvas>
              <VScroll><ScrollArrow up /><Thumb /><ScrollArrow /></VScroll>
              <EdgeBar />
            </ViewRow>
            <ViewBar>
              <ScaleText>1 : 100</ScaleText>
              {viewIcons.map(([c, d], i) => <PlainButton key={i} aria-label={`视图控制 ${i + 1}`}><Svg s={8} stroke={c}>{d}</Svg></PlainButton>)}
              <span>&lt;</span>
              <HScroll><Thumb /></HScroll>
            </ViewBar>
          </ViewArea>
        </Workspace>
      </Page>
    </>
  );
}
